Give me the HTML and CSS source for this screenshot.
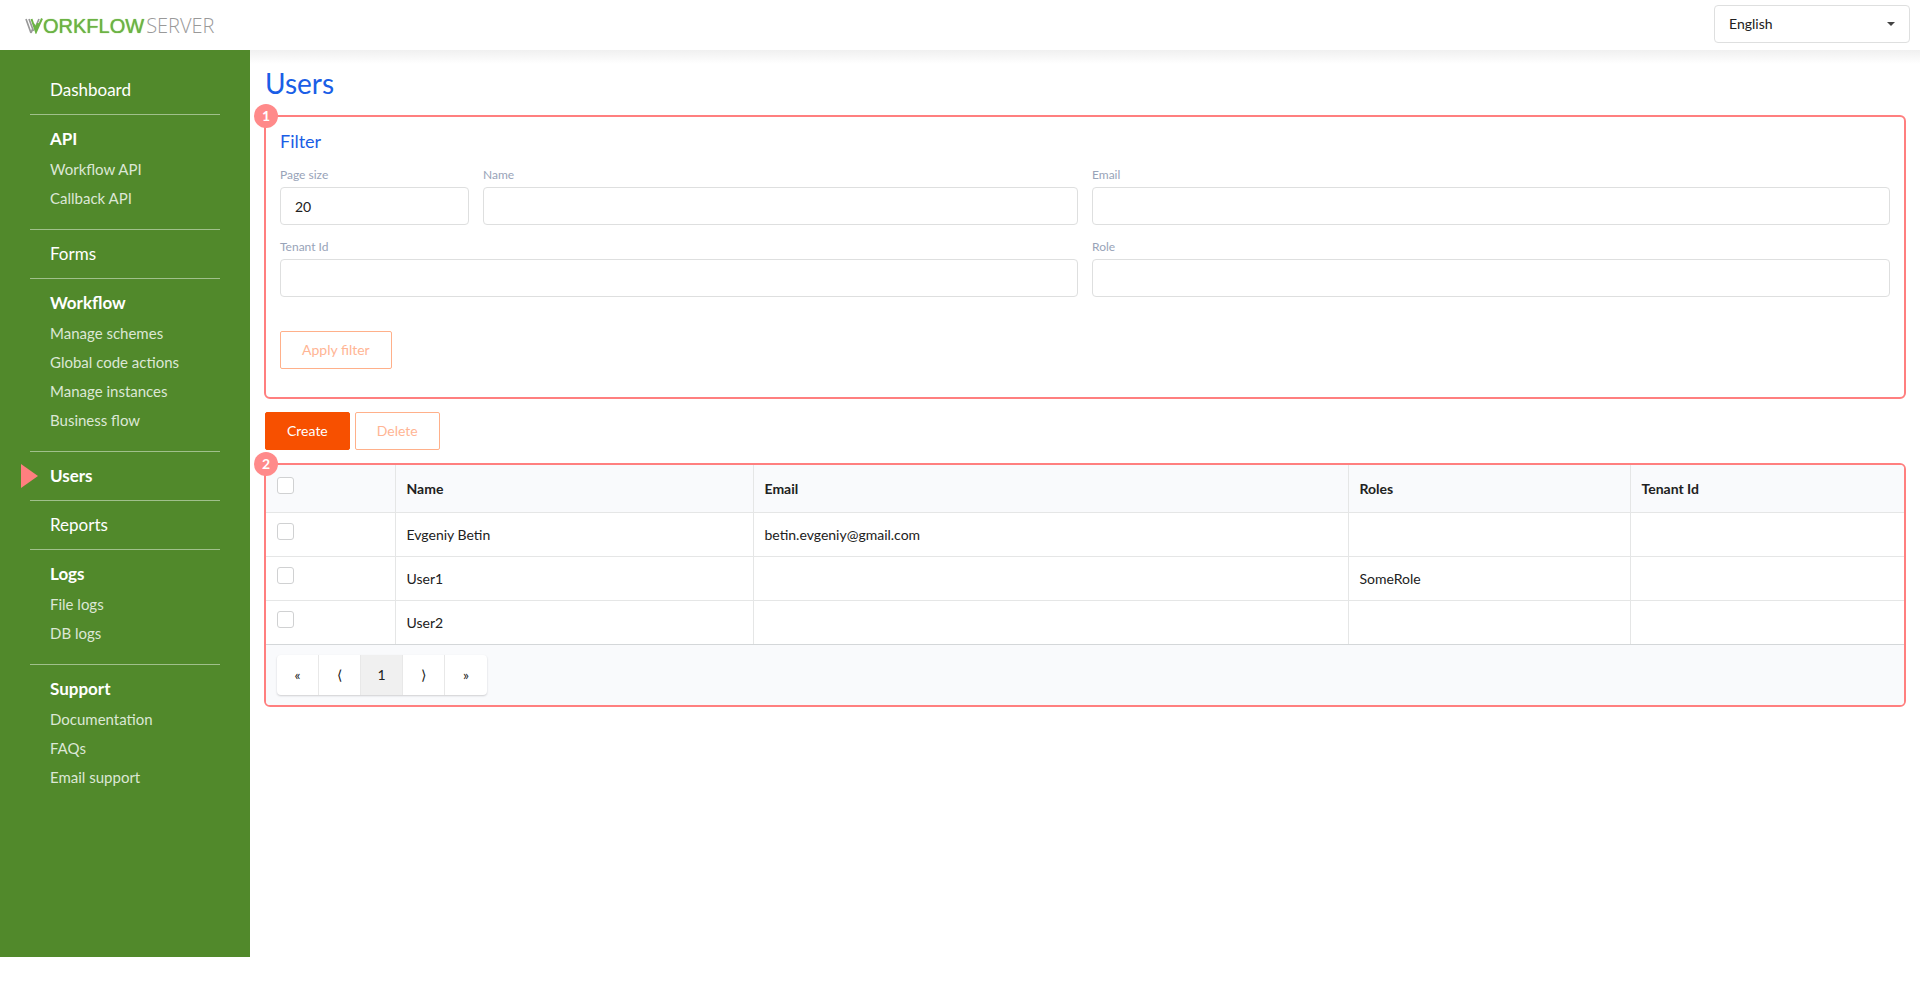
FILE: index.html
```html
<!DOCTYPE html>
<html lang="en">
<head>
    <meta charset="UTF-8">
    <meta name="viewport" content="width=device-width, initial-scale=1.0">
    <title>Users - Workflow Server</title>
    <link rel="stylesheet" href="styles.css">
</head>
<body>
    <header class="header">
        <a href="#" class="logo">
            <svg class="logo-mark" width="18" height="16" viewBox="0 0 18 16" aria-hidden="true">
                <path d="M1 1 L6 15 M4 1 L8.500 13 M6 15 L8 10 M14 1 L10.500 9" fill="none" stroke="#999" stroke-width="1.700"/>
                <path d="M6.500 1 L11 14 L17 0.500 M8.500 6 L11 10 L13 5" fill="none" stroke="#6cb344" stroke-width="2"/>
            </svg>
            <span class="logo-bold">ORKFLOW</span>
            <span class="logo-thin">SERVER</span>
        </a>
        <select class="language" aria-label="Language">
            <option>English</option>
        </select>
    </header>

    <div class="layout">
        <nav class="sidebar">
            <div class="menu-item"><a href="#" class="menu-title">Dashboard</a></div>
            <div class="menu-item group">
                <div class="menu-title bold">API</div>
                <a href="#" class="menu-link">Workflow API</a>
                <a href="#" class="menu-link">Callback API</a>
            </div>
            <div class="menu-item"><a href="#" class="menu-title">Forms</a></div>
            <div class="menu-item group">
                <div class="menu-title bold">Workflow</div>
                <a href="#" class="menu-link">Manage schemes</a>
                <a href="#" class="menu-link">Global code actions</a>
                <a href="#" class="menu-link">Manage instances</a>
                <a href="#" class="menu-link">Business flow</a>
            </div>
            <div class="menu-item active"><a href="#" class="menu-title bold">Users</a></div>
            <div class="menu-item"><a href="#" class="menu-title">Reports</a></div>
            <div class="menu-item group">
                <div class="menu-title bold">Logs</div>
                <a href="#" class="menu-link">File logs</a>
                <a href="#" class="menu-link">DB logs</a>
            </div>
            <div class="menu-item group">
                <div class="menu-title bold">Support</div>
                <a href="#" class="menu-link">Documentation</a>
                <a href="#" class="menu-link">FAQs</a>
                <a href="#" class="menu-link">Email support</a>
            </div>
        </nav>

        <main class="content">
            <h1>Users</h1>

            <section class="panel filter">
                <span class="badge">1</span>
                <h2>Filter</h2>
                <form>
                    <div class="fields">
                        <div class="field">
                            <label for="pageSize">Page size</label>
                            <input type="text" id="pageSize" name="pageSize" value="20">
                        </div>
                        <div class="field medium">
                            <label for="name">Name</label>
                            <input type="text" id="name" name="name">
                        </div>
                        <div class="field wide">
                            <label for="email">Email</label>
                            <input type="text" id="email" name="email">
                        </div>
                        <div class="field wide">
                            <label for="tenantId">Tenant Id</label>
                            <input type="text" id="tenantId" name="tenantId">
                        </div>
                        <div class="field wide">
                            <label for="role">Role</label>
                            <input type="text" id="role" name="role">
                        </div>
                    </div>
                    <button type="button" class="button outline">Apply filter</button>
                </form>
            </section>

            <div class="actions">
                <button type="button" class="button primary">Create</button>
                <button type="button" class="button outline">Delete</button>
            </div>

            <section class="panel">
                <span class="badge">2</span>
                <div class="grid">
                    <table>
                        <colgroup>
                            <col class="col-check">
                            <col class="col-name">
                            <col class="col-email">
                            <col class="col-roles">
                            <col>
                        </colgroup>
                        <thead>
                            <tr>
                                <th><input type="checkbox" aria-label="Select all"></th>
                                <th>Name</th>
                                <th>Email</th>
                                <th>Roles</th>
                                <th>Tenant Id</th>
                            </tr>
                        </thead>
                        <tbody>
                            <tr>
                                <td><input type="checkbox" aria-label="Select Evgeniy Betin"></td>
                                <td>Evgeniy Betin</td>
                                <td>betin.evgeniy@gmail.com</td>
                                <td></td>
                                <td></td>
                            </tr>
                            <tr>
                                <td><input type="checkbox" aria-label="Select User1"></td>
                                <td>User1</td>
                                <td></td>
                                <td>SomeRole</td>
                                <td></td>
                            </tr>
                            <tr>
                                <td><input type="checkbox" aria-label="Select User2"></td>
                                <td>User2</td>
                                <td></td>
                                <td></td>
                                <td></td>
                            </tr>
                        </tbody>
                    </table>
                    <div class="grid-footer">
                        <div class="pagination">
                            <button type="button">«</button>
                            <button type="button">⟨</button>
                            <button type="button" class="current">1</button>
                            <button type="button">⟩</button>
                            <button type="button">»</button>
                        </div>
                    </div>
                </div>
            </section>
        </main>
    </div>
</body>
</html>
```
FILE: styles.css
```css
* {
    box-sizing: border-box;
}

body {
    margin: 0;
    font-family: Lato, sans-serif;
    font-size: 14px;
    color: #212121;
    background-color: #fff;
}

a {
    color: inherit;
    text-decoration: none;
}

/* Header */
.header {
    display: flex;
    justify-content: space-between;
    align-items: center;
    height: 50px;
    padding: 0 10px 2px 25px;
}

.logo {
    display: flex;
    align-items: center;
    padding-top: 4px;
    line-height: 20px;
}

.logo-bold {
    font-family: "Liberation Sans", Arial, sans-serif;
    font-size: 20px;
    color: #6cb344;
    text-shadow: 0 0 1px #6cb344;
}

.logo-thin {
    margin-left: 2px;
    font-family: "Open Sans", sans-serif;
    font-size: 20px;
    font-weight: 300;
    color: #999;
}

.language {
    width: 196px;
    height: 38px;
    padding: 0 14px 2px;
    border: 1px solid #dedfdf;
    border-radius: 4px;
    font: inherit;
    color: #212121;
    appearance: none;
    background: #fff url("data:image/svg+xml,%3Csvg xmlns='http://www.w3.org/2000/svg' width='8' height='4'%3E%3Cpath d='M0 0h8L4 4z' fill='%23444'/%3E%3C/svg%3E") no-repeat right 14px center;
}

.layout {
    display: flex;
    align-items: flex-start;
}

/* Sidebar */
.sidebar {
    width: 250px;
    min-height: calc(100vh - 100px);
    padding: 16px 30px;
    background-color: #51892b;
    color: #fff;
}

.menu-item {
    position: relative;
    padding: 12px 20px;
    border-top: 1px solid #a0c08b;
}

.menu-item:first-child {
    border-top: none;
}

.menu-item.group {
    padding-bottom: 16px;
}

.menu-title {
    display: block;
    font-size: 17px;
    line-height: 24px;
}

.menu-title.bold {
    font-weight: bold;
}

.group .menu-title {
    margin-bottom: 4px;
}

.menu-link {
    display: block;
    font-size: 15px;
    line-height: 29px;
    color: #dce7d5;
}

.menu-item.active::before {
    content: "";
    position: absolute;
    left: -9px;
    top: 12px;
    border-left: 17px solid #ff7f7f;
    border-top: 12px solid transparent;
    border-bottom: 12px solid transparent;
}

/* Content */
.content {
    flex: 1;
    min-width: 0;
    padding: 16px 14px 0;
    background: linear-gradient(#f0f0f0, #fff 14px);
}

h1 {
    margin: 0 0 15px 1px;
    font-size: 28px;
    font-weight: normal;
    line-height: 34px;
    color: #1a5ee6;
}

h2 {
    margin: 0 0 14px;
    font-size: 18px;
    font-weight: normal;
    line-height: 24px;
    color: #1a5ee6;
}

.panel {
    position: relative;
    border: 2px solid #ff7f7f;
    border-radius: 6px;
}

.badge {
    position: absolute;
    top: -13px;
    left: -12px;
    width: 24px;
    height: 24px;
    border-radius: 50%;
    background-color: #ff8a8a;
    color: #fff;
    font-size: 14px;
    font-weight: bold;
    line-height: 24px;
    text-align: center;
}

.filter {
    padding: 12px 14px 28px;
}

.fields {
    display: grid;
    grid-template-columns: repeat(8, 1fr);
    gap: 14px;
    margin-bottom: 34px;
}

.medium {
    grid-column: span 3;
}

.wide {
    grid-column: span 4;
}

.field label {
    display: block;
    margin-bottom: 4px;
    font-size: 12px;
    line-height: 16px;
    color: #98a3b8;
}

.field input {
    display: block;
    width: 100%;
    height: 38px;
    padding: 0 14px;
    border: 1px solid #dedfdf;
    border-radius: 4px;
    font: inherit;
    color: #212121;
}

.button {
    height: 38px;
    padding: 0 21px 1px;
    border: 1px solid #ffb08a;
    border-radius: 2px;
    background-color: #fff;
    color: #ffb594;
    font: inherit;
    cursor: pointer;
}

.button.primary {
    border-color: #f75000;
    background-color: #f75000;
    color: #fff;
}

.actions {
    display: flex;
    gap: 5px;
    margin: 13px 1px;
}

/* Users table */
.grid {
    overflow: hidden;
    border-radius: 4px;
}

table {
    width: 100%;
    border-collapse: collapse;
    table-layout: fixed;
}

.col-check {
    width: 129px;
}

.col-name {
    width: 358px;
}

.col-email {
    width: 595px;
}

.col-roles {
    width: 282px;
}

th,
td {
    height: 44px;
    padding: 0 11px;
    border-bottom: 1px solid #e5e6e6;
    border-left: 1px solid #e5e6e6;
    text-align: left;
}

th:first-child,
td:first-child {
    border-left: none;
}

th {
    height: 47px;
    background-color: #f9fafc;
}

tbody tr:last-child td {
    border-bottom-color: #d4d7d9;
}

input[type="checkbox"] {
    display: block;
    width: 17px;
    height: 17px;
    margin: 0 0 5px;
    border: 1px solid #d0d1d2;
    border-radius: 3px;
    background-color: #fff;
    appearance: none;
}

.grid-footer {
    padding: 10px 11px;
    background-color: #f9fafc;
}

.pagination {
    display: inline-flex;
    vertical-align: top;
    border-radius: 4px;
    background-color: #fff;
    box-shadow: 0 1px 2px rgba(34, 36, 38, 0.2);
}

.pagination button {
    width: 42px;
    height: 40px;
    padding: 0;
    border: none;
    border-right: 1px solid #e8e8e8;
    background: none;
    font: inherit;
    color: #212121;
}

.pagination button:last-child {
    border-right: none;
}

.pagination .current {
    background-color: #f0f0f0;
}
```
